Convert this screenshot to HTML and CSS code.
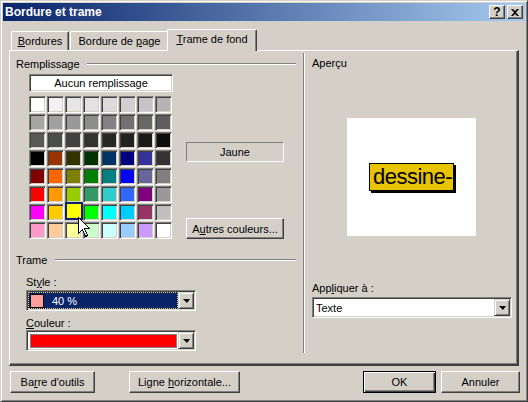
FILE: index.html
```html
<!DOCTYPE html>
<html lang="fr">
  <head>
    <meta charset="UTF-8" />
    <title>Bordure et trame</title>
    <link rel="stylesheet" href="styles.css">
  </head>
  <body>
    <div class="window">
      <div class="titlebar">
        <span class="title">Bordure et trame</span>
        <div class="caption-btns">
          <span class="cap-btn help">?</span>
          <span class="cap-btn">
            <svg width="8" height="7" viewBox="0 0 8 7"><path d="M0 0h2l2 2 2-2h2L5 3.5 8 7H6L4 5 2 7H0l3-3.5z" fill="#000"/></svg>
          </span>
        </div>
      </div>

      <div class="body">
        <div class="tabs">
          <div class="tab tab-first"><span><u>B</u>ordures</span></div>
          <div class="tab tab-second"><span>Bordure de <u>p</u>age</span></div>
          <div class="tab active"><span><u>T</u>rame de fond</span></div>
        </div>

        <div class="panel">
          <div class="col-left">
            <div class="legend"><span>Remplissage</span><i class="rule"></i></div>

            <div class="fill-row">
              <div class="swatches">
                <div class="btn none-btn">Aucun remplissage</div>
                <div class="grid" id="grid"></div>
              </div>
              <div class="side">
                <div class="name-box">Jaune</div>
                <div class="btn more-btn"><span>A<u>u</u>tres couleurs...</span></div>
              </div>
            </div>

            <div class="legend trame"><span>Trame</span><i class="rule"></i></div>
            <div class="label style-label">St<u>y</u>le :</div>
            <div class="combo">
              <div class="value focus">
                <span class="pattern"></span>
                <span class="value-text">40 %</span>
              </div>
              <span class="drop"><i></i></span>
            </div>
            <div class="label color-label"><u>C</u>ouleur :</div>
            <div class="combo">
              <div class="value"><span class="red-bar"></span></div>
              <span class="drop"><i></i></span>
            </div>
          </div>

          <div class="separator"></div>

          <div class="col-right">
            <div class="legend-text">Aperçu</div>
            <div class="preview"><span class="sample">dessine-</span></div>
            <div class="label apply-label">App<u>l</u>iquer à :</div>
            <div class="combo wide">
              <div class="value plain">Texte</div>
              <span class="drop"><i></i></span>
            </div>
          </div>
        </div>

        <div class="footer">
          <div class="btn toolbar-btn"><span>Ba<u>r</u>re d'outils</span></div>
          <div class="btn line-btn"><span>Ligne <u>h</u>orizontale...</span></div>
          <div class="btn ok-btn">OK</div>
          <div class="btn cancel-btn">Annuler</div>
        </div>
      </div>

      <svg class="cursor" width="13" height="21" viewBox="0 0 13 21">
        <path d="M0.5 0.5V16.5L4.5 12.5L7.5 19.5L9.5 18.5L6.5 11.5H11.5Z" fill="#fff" stroke="#000" stroke-width="1" shape-rendering="crispEdges"/>
      </svg>
    </div>

    <script>
      // palette de trame (8 x 8)
      const colors = [
        "#ffffff", "#f3f1f3", "#e6e6e6", "#e3e0e3", "#dcdadc", "#d0d0d0", "#c6c4c6", "#b4b4b4",
        "#a6a6a6", "#a0a0a0", "#999999", "#8c8e8a", "#838183", "#716f71", "#666864", "#5e5e5e",
        "#595959", "#4c4e4c", "#414141", "#333333", "#262826", "#222222", "#1a1a1a", "#0c0e0c",
        "#000000", "#993300", "#333300", "#003300", "#003366", "#000080", "#333399", "#333333",
        "#800000", "#ff6600", "#808000", "#008000", "#008080", "#0000ff", "#666699", "#808080",
        "#ff0000", "#ff9900", "#99cc00", "#339966", "#33cccc", "#3366ff", "#800080", "#999999",
        "#ff00ff", "#ffcc00", "#ffff00", "#00ff00", "#00ffff", "#00ccff", "#993366", "#c0c0c0",
        "#ff99cc", "#ffcc99", "#ffff99", "#ccffcc", "#ccffff", "#99ccff", "#cc99ff", "#ffffff"
      ];
      const grid = document.getElementById("grid");
      colors.forEach((c, i) => {
        const cell = document.createElement("span");
        cell.className = i == 50 ? "cell selected" : "cell";
        cell.style.background = c;
        grid.appendChild(cell);
      });
    </script>
  </body>
</html>
```

FILE: styles.css
```css
body {
  margin: 0;
  font-family: "Liberation Sans", Arial, sans-serif;
  font-size: 11px;
  color: #000;
  background: #d4d0c8;
}

u {
  text-decoration: underline;
  text-underline-offset: 1px;
}

/* fenêtre */
.window {
  position: relative;
  width: 528px;
  height: 402px;
  box-sizing: border-box;
  padding: 2px;
  background: #d4d0c8;
  border: 1px solid;
  border-color: #d4d0c8 #404040 #404040 #d4d0c8;
  box-shadow: inset 1px 1px #fff, inset -1px -1px #808080;
  display: flex;
  flex-direction: column;
}

.titlebar {
  height: 18px;
  display: flex;
  align-items: center;
  justify-content: space-between;
  background: linear-gradient(to right, #0a246a, #a6caf0);
}

.title {
  padding-left: 2px;
  color: #fff;
  font-weight: bold;
  font-size: 12px;
}

.caption-btns {
  display: flex;
  gap: 2px;
  margin-right: 2px;
}

.cap-btn {
  width: 16px;
  height: 14px;
  box-sizing: border-box;
  display: flex;
  align-items: center;
  justify-content: center;
  background: #d4d0c8;
  border: 1px solid;
  border-color: #fff #404040 #404040 #fff;
  box-shadow: inset -1px -1px #808080;
}

.cap-btn.help {
  font-weight: bold;
  font-size: 12px;
  line-height: 12px;
}

.body {
  flex: 1;
  padding: 8px 6px 6px;
  display: flex;
  flex-direction: column;
}

/* onglets */
.tabs {
  height: 21px;
  display: flex;
  align-items: flex-end;
  padding-left: 2px;
}

.tab {
  height: 19px;
  box-sizing: border-box;
  display: flex;
  align-items: center;
  justify-content: center;
  border-top: 1px solid #fff;
  border-left: 1px solid #fff;
  border-right: 1px solid #404040;
  border-radius: 2px 2px 0 0;
  box-shadow: inset -1px 0 #808080;
  padding-bottom: 1px;
}

.tab-first {
  width: 58px;
}

.tab-second {
  width: 99px;
  margin-left: 1px;
}

.tab.active {
  position: relative;
  z-index: 1;
  width: 90px;
  height: 22px;
  margin: 0 -2px -1px -2px;
  background: #d4d0c8;
  padding-bottom: 3px;
}

.panel {
  height: 316px;
  box-sizing: border-box;
  display: flex;
  border: 1px solid;
  border-width: 1px 2px 2px 1px;
  border-color: #fff;
  border-right-color: #404040;
  border-bottom-color: #404040;
  box-shadow: inset -1px -1px #808080;
}

/* colonne gauche */
.col-left {
  width: 293px;
  box-sizing: border-box;
  padding: 6px 7px 0 6px;
}

.legend {
  height: 13px;
  display: flex;
  align-items: center;
}

.rule {
  flex: 1;
  margin-left: 7px;
  border-top: 1px solid #808080;
  border-bottom: 1px solid #fff;
}

.trame {
  margin-top: 13px;
}

.trame .rule {
  margin-left: 8px;
}

.fill-row {
  display: flex;
  margin-top: 4px;
  padding-left: 13px;
}

.swatches {
  width: 144px;
}

.btn {
  box-sizing: border-box;
  display: flex;
  align-items: center;
  justify-content: center;
  background: #d4d0c8;
  border: 1px solid;
  border-color: #fff #404040 #404040 #fff;
  box-shadow: inset -1px -1px #808080;
}

.none-btn {
  width: 144px;
  height: 18px;
  background: #fff;
  border-color: #808080 #fff #fff #808080;
  box-shadow: inset 1px 1px #404040, inset -1px -1px #d4d0c8;
}

.grid {
  margin-top: 4px;
  display: grid;
  grid-template-columns: repeat(8, 18px);
  grid-auto-rows: 18px;
}

.cell {
  width: 17px;
  height: 17px;
  box-sizing: border-box;
  border: 1px solid;
  border-color: #808080 #fff #fff #808080;
  box-shadow: inset 1px 1px #404040, inset -1px -1px #d4d0c8;
}

.cell.selected {
  width: 18px;
  height: 18px;
  margin: -2px 0 0 0;
  border: 2px solid #0a246a;
  box-shadow: none;
}

.side {
  width: 98px;
  margin-left: 13px;
  display: flex;
  flex-direction: column;
}

.name-box {
  height: 20px;
  margin-top: 68px;
  box-sizing: border-box;
  display: flex;
  align-items: center;
  justify-content: center;
  border: 1px solid;
  border-color: #808080 #fff #fff #808080;
}

.more-btn {
  height: 21px;
  margin-top: 56px;
}

.label {
  height: 13px;
  line-height: 13px;
}

.style-label {
  margin: 10px 0 0 10px;
}

.color-label {
  margin: 6px 0 0 10px;
}

/* listes déroulantes */
.combo {
  width: 170px;
  height: 21px;
  margin: 1px 0 0 10px;
  box-sizing: border-box;
  padding: 1px;
  display: flex;
  background: #fff;
  border: 1px solid;
  border-color: #808080 #fff #fff #808080;
  box-shadow: inset 1px 1px #404040, inset -1px -1px #d4d0c8;
}

.color-label + .combo {
  margin-top: 0;
}

.value {
  flex: 1;
  display: flex;
  align-items: center;
}

.value.focus {
  background: #0a246a;
  color: #fff;
  outline: 1px dotted #f0d070;
  outline-offset: -1px;
}

.pattern {
  width: 12px;
  height: 12px;
  margin-left: 2px;
  border: 1px solid #000;
  background: #ff9c9c;
}

.value-text {
  margin-left: 8px;
}

.red-bar {
  flex: 1;
  height: 12px;
  margin: 0 1px 0 2px;
  background: #ff0000;
  border: 1px solid #808080;
}

.drop {
  width: 16px;
  height: 17px;
  box-sizing: border-box;
  display: flex;
  align-items: center;
  justify-content: center;
  background: #d4d0c8;
  border: 1px solid;
  border-color: #d4d0c8 #404040 #404040 #d4d0c8;
  box-shadow: inset 1px 1px #fff, inset -1px -1px #808080;
}

.drop i {
  width: 0;
  height: 0;
  border-left: 4px solid transparent;
  border-right: 3px solid transparent;
  border-top: 4px solid #000;
}

.separator {
  width: 0;
  height: 300px;
  margin-top: 2px;
  border-left: 1px solid #808080;
  border-right: 1px solid #fff;
}

/* colonne droite */
.col-right {
  flex: 1;
  padding: 6px 5px 0 7px;
  display: flex;
  flex-direction: column;
}

.legend-text {
  height: 13px;
  line-height: 13px;
}

.preview {
  width: 129px;
  height: 118px;
  margin: 48px 0 0 35px;
  background: #fff;
  display: flex;
  align-items: center;
  justify-content: center;
}

.sample {
  height: 26px;
  padding: 0 1px 0 3px;
  border: 1px solid #000;
  box-shadow: 2px 2px 0 #000;
  line-height: 26px;
  font-size: 22px;
  letter-spacing: -0.5px;
  background: #e8c400;
}

.apply-label {
  margin-top: 46px;
}

.combo.wide {
  width: 200px;
  margin: 2px 0 0 0;
}

.value.plain {
  padding-left: 2px;
}

/* boutons du bas */
.footer {
  height: 22px;
  margin-top: 5px;
  display: flex;
}

.toolbar-btn {
  width: 85px;
  margin-left: 1px;
}

.line-btn {
  width: 111px;
  margin-left: 34px;
}

.ok-btn {
  width: 73px;
  margin-left: auto;
  border-color: #000;
  box-shadow: inset 1px 1px #fff, inset -1px -1px #404040, inset -2px -2px #808080;
}

.cancel-btn {
  width: 79px;
  margin: 0 -1px 0 5px;
}

.cursor {
  position: absolute;
  left: 77px;
  top: 216px;
}
```
